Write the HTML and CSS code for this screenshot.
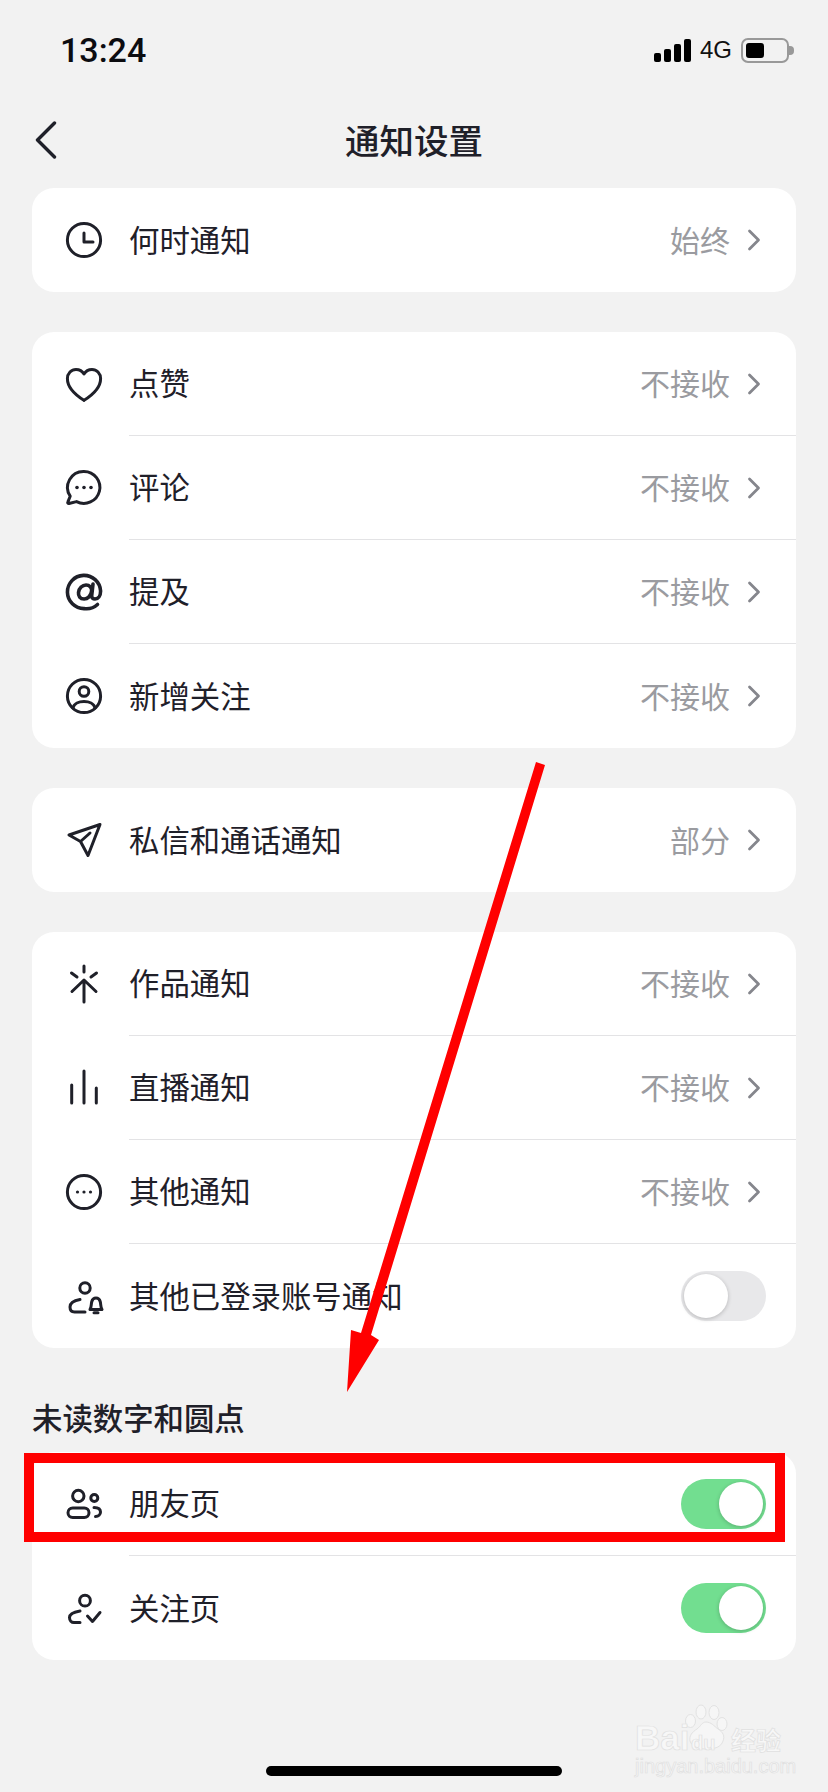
FILE: index.html
```html
<!DOCTYPE html>
<html lang="zh-CN">
<head>
  <meta charset="UTF-8">
  <meta name="viewport" content="width=device-width, initial-scale=1.0">
  <title>通知设置</title>
  <link rel="stylesheet" href="styles.css">
</head>
<body>
  <!-- Status bar -->
  <div class="status-bar">
    <span class="clock">13:24</span>
    <div class="status-right">
      <div class="signal"><i class="s1"></i><i class="s2"></i><i class="s3"></i><i class="s4"></i></div>
      <span class="network">4G</span>
      <div class="battery"><div class="battery-fill"></div></div>
      <div class="battery-nub"></div>
    </div>
  </div>

  <!-- Nav -->
  <div class="nav">
    <svg class="back" width="24" height="38" viewBox="0 0 24 38"><path d="M20.5 2L3.5 19l17 17"/></svg>
    <h1>通知设置</h1>
  </div>

  <div class="content">
    <div class="card">
      <div class="row">
        <svg class="icon" viewBox="0 0 40 40"><circle cx="20" cy="20" r="16.6"/><path d="M20 13v9h9"/></svg>
        <div class="row-body"><span class="label">何时通知</span><span class="value">始终</span>
          <svg class="chevron" viewBox="0 0 14 22"><path d="M2.5 2l9 9-9 9"/></svg></div>
      </div>
    </div>

    <div class="card">
      <div class="row">
        <svg class="icon" viewBox="0 0 40 40"><path d="M20 36.4C17 34.5 3.4 26 3.4 14.8 3.4 9.4 7.4 5.4 12 5.4c3.4 0 6.4 1.8 8 4.6 1.6-2.8 4.6-4.6 8-4.6 4.6 0 8.6 4 8.6 9.4C36.6 26 23 34.5 20 36.4z"/></svg>
        <div class="row-body"><span class="label">点赞</span><span class="value">不接收</span>
          <svg class="chevron" viewBox="0 0 14 22"><path d="M2.5 2l9 9-9 9"/></svg></div>
      </div>
      <div class="row">
        <svg class="icon" viewBox="0 0 40 40"><path d="M20 3.4a16 16 0 1 1-7.5 30.2L5 35.5c-1 .2-1.6-.6-1.2-1.4l2.4-5.9A16 16 0 0 1 20 3.4z"/><circle class="dot" cx="13" cy="19.5" r="1.8"/><circle class="dot" cx="20" cy="19.5" r="1.8"/><circle class="dot" cx="27" cy="19.5" r="1.8"/></svg>
        <div class="row-body"><span class="label">评论</span><span class="value">不接收</span>
          <svg class="chevron" viewBox="0 0 14 22"><path d="M2.5 2l9 9-9 9"/></svg></div>
      </div>
      <div class="row">
        <svg class="icon icon-at" viewBox="0 0 40 40"><path d="M33.5 32.5A16.4 16.4 0 0 1 20 36.6 16.6 16.6 0 1 1 36.6 19c0 5-2.6 8-5.600 8-2 0-3.500-1-3.300-3.500L29 12"/><path d="M27.600 19c-.5 5-4 8-7.500 8-4 0-6-3-5.600-6.500.5-4.500 4-7.500 7.500-7.500 3.500 0 6 2.500 5.600 6z"/></svg>
        <div class="row-body"><span class="label">提及</span><span class="value">不接收</span>
          <svg class="chevron" viewBox="0 0 14 22"><path d="M2.5 2l9 9-9 9"/></svg></div>
      </div>
      <div class="row">
        <svg class="icon" viewBox="0 0 40 40"><circle cx="20" cy="20" r="16.6"/><circle cx="20" cy="15.5" r="4.8"/><path d="M9 32c1-4.500 6-6.500 11-6.500s10 2 11 6.500"/></svg>
        <div class="row-body"><span class="label">新增关注</span><span class="value">不接收</span>
          <svg class="chevron" viewBox="0 0 14 22"><path d="M2.5 2l9 9-9 9"/></svg></div>
      </div>
    </div>

    <div class="card">
      <div class="row">
        <svg class="icon" viewBox="0 0 40 40"><path d="M36 4.5L5 15l11.500 6.500L24 35.500zM16.500 21.500L26 13"/></svg>
        <div class="row-body"><span class="label">私信和通话通知</span><span class="value">部分</span>
          <svg class="chevron" viewBox="0 0 14 22"><path d="M2.5 2l9 9-9 9"/></svg></div>
      </div>
    </div>

    <div class="card">
      <div class="row">
        <svg class="icon" viewBox="0 0 40 40"><path d="M20 16v22M8 27.500l12-11.500 12 11.500M20 2v6M7.500 9l5.500 4M32.500 9l-5.500 4"/></svg>
        <div class="row-body"><span class="label">作品通知</span><span class="value">不接收</span>
          <svg class="chevron" viewBox="0 0 14 22"><path d="M2.5 2l9 9-9 9"/></svg></div>
      </div>
      <div class="row">
        <svg class="icon" viewBox="0 0 40 40"><path d="M7.700 17v18M20 3v32M32.300 20v15"/></svg>
        <div class="row-body"><span class="label">直播通知</span><span class="value">不接收</span>
          <svg class="chevron" viewBox="0 0 14 22"><path d="M2.5 2l9 9-9 9"/></svg></div>
      </div>
      <div class="row">
        <svg class="icon" viewBox="0 0 40 40"><circle cx="20" cy="20" r="16.6"/><circle class="dot" cx="13.5" cy="20" r="1.6"/><circle class="dot" cx="20" cy="20" r="1.6"/><circle class="dot" cx="26.5" cy="20" r="1.6"/></svg>
        <div class="row-body"><span class="label">其他通知</span><span class="value">不接收</span>
          <svg class="chevron" viewBox="0 0 14 22"><path d="M2.5 2l9 9-9 9"/></svg></div>
      </div>
      <div class="row">
        <svg class="icon" viewBox="0 0 40 40"><circle cx="21" cy="12" r="5.2"/><path d="M16 23.500c-6 1-10 3.500-10 7.500 0 3.500 2 5 4.500 5H21"/><path d="M26 33.500c1.500-2 1-5 1.800-8 .7-2.500 2.200-3.500 4.200-3.500s3.500 1 4.200 3.500c.8 3 .3 6 1.800 8zM30 36.800h4"/></svg>
        <div class="row-body"><span class="label">其他已登录账号通知</span>
          <div class="toggle"><div class="knob"></div></div></div>
      </div>
    </div>

    <h2 class="section-title">未读数字和圆点</h2>
    <div class="card">
      <div class="row">
        <svg class="icon" viewBox="0 0 40 40"><circle cx="14.3" cy="12" r="5.7"/><rect x="4" y="24" width="21" height="9.5" rx="4.7"/><circle cx="30.3" cy="14" r="3.5"/><path d="M30 23.500c4.500 0 6.500 2 6.500 4.500s-2 4.500-5 4.500"/></svg>
        <div class="row-body"><span class="label">朋友页</span>
          <div class="toggle on"><div class="knob"></div></div></div>
      </div>
      <div class="row">
        <svg class="icon" viewBox="0 0 40 40"><circle cx="21" cy="12.7" r="5.4"/><path d="M16 23c-6 1-10.500 3-10.500 6.500 0 3 2 5 4.500 5h6"/><path d="M23.500 28l5 5.500 7.500-9"/></svg>
        <div class="row-body"><span class="label">关注页</span>
          <div class="toggle on"><div class="knob"></div></div></div>
      </div>
    </div>
  </div>

  <div class="home-bar"></div>

  <!-- Annotations drawn over the screenshot -->
  <div class="red-box"></div>
  <svg class="red-arrow" width="828" height="1792" viewBox="0 0 828 1792"><polygon points="536,762 545,765 371,1335 379,1340 347,1392 351,1330 361,1333"/></svg>

  <!-- Watermark -->
  <div class="watermark">
    <svg class="paw" width="50" height="52" viewBox="0 0 50 52"><ellipse cx="17" cy="9" rx="5" ry="7"/><ellipse cx="30" cy="9.5" rx="5" ry="7"/><ellipse cx="6.5" cy="18" rx="5" ry="6.5"/><ellipse cx="38" cy="21" rx="5" ry="6.5"/><path d="M22 19c5 0 8 4 12 7 5 3 7 7 5 12-2 6-8 8-16 8-8 0-15-2-17-8-1-5 2-9 7-12 4-3 5-7 9-7z"/></svg>
    <div class="wm-top"><span class="wm-bai">Bai</span><span class="wm-du">du</span><span class="wm-cn">经验</span></div>
    <div class="wm-url">jingyan.baidu.com</div>
  </div>
</body>
</html>
```

FILE: styles.css
```css
* {
  box-sizing: border-box;
}

body {
  margin: 0;
  width: 828px;
  height: 1792px;
  position: relative;
  overflow: hidden;
  background-color: #f2f2f2;
  color: #1f2029;
  font-family: "Noto Sans CJK SC", "Noto Sans", sans-serif;
}

/* Status bar */
.status-bar {
  height: 100px;
  padding: 0 34px 0 60px;
  display: flex;
  justify-content: space-between;
  align-items: center;
}
.clock {
  font-family: Roboto, "Liberation Sans", sans-serif;
  font-size: 34px;
  font-weight: 500;
  color: #0c0c10;
}
.status-right {
  display: flex;
  align-items: center;
}
.signal {
  display: flex;
  align-items: flex-end;
  gap: 3px;
  height: 23px;
  margin-right: 9px;
}
.signal i {
  display: block;
  width: 7px;
  background-color: #000;
  border-radius: 2px;
}
.s1 { height: 9px; }
.s2 { height: 13px; }
.s3 { height: 18px; }
.s4 { height: 23px; }
.network {
  font-family: "Liberation Sans", sans-serif;
  font-size: 24px;
  color: #111;
  margin-right: 9px;
}
.battery {
  width: 48px;
  height: 25px;
  padding: 3px;
  border: 2px solid #999;
  border-radius: 7px;
}
.battery-fill {
  width: 18px;
  height: 100%;
  background-color: #000;
  border-radius: 3px;
}
.battery-nub {
  width: 5px;
  height: 9px;
  background-color: #999;
  border-radius: 0 4px 4px 0;
}

/* Nav */
.nav {
  height: 80px;
  margin-bottom: 8px;
  display: flex;
  align-items: center;
  justify-content: center;
  position: relative;
}
.back {
  position: absolute;
  left: 34px;
  top: 21px;
}
.back path {
  fill: none;
  stroke: #1f2029;
  stroke-width: 3.4;
  stroke-linecap: round;
  stroke-linejoin: round;
}
.nav h1 {
  margin: 0 0 2px;
  font-size: 34.5px;
  font-weight: 500;
  line-height: 48px;
}

/* Cards and rows */
.content {
  padding: 0 32px;
}
.card {
  background-color: #fff;
  border-radius: 22px;
  margin-bottom: 40px;
  overflow: hidden;
}
.row {
  height: 104px;
  padding-left: 32px;
  display: flex;
  align-items: center;
  gap: 25px;
}
.icon {
  width: 40px;
  height: 40px;
  flex: none;
  overflow: visible;
  fill: none;
  stroke: #1f2029;
  stroke-width: 3;
  stroke-linecap: round;
  stroke-linejoin: round;
}
.icon-at {
  stroke-width: 3.6;
}
.icon .dot {
  fill: #1f2029;
  stroke: none;
}
.row-body {
  flex: 1;
  height: 100%;
  padding-right: 30px;
  display: flex;
  align-items: center;
  border-bottom: 1px solid #e3e3e5;
}
.row:last-child .row-body {
  border-bottom: none;
}
.label {
  flex: 1;
  font-size: 30.4px;
  line-height: 42px;
  padding-bottom: 3px;
}
.value {
  font-size: 30px;
  line-height: 42px;
  padding-bottom: 3px;
  color: #9a9ba0;
}
.chevron {
  width: 14px;
  height: 22px;
  margin: 0 5px 0 17px;
  fill: none;
  stroke: #85868c;
  stroke-width: 2.8;
  stroke-linecap: round;
  stroke-linejoin: round;
}

/* Switches */
.toggle {
  width: 85px;
  height: 50px;
  padding: 3px;
  display: flex;
  border-radius: 25px;
  background-color: #e8e8ea;
}
.toggle .knob {
  width: 44px;
  height: 44px;
  border-radius: 50%;
  background-color: #fff;
  box-shadow: 0 1px 4px rgba(0,0,0,0.22);
}
.toggle.on {
  justify-content: flex-end;
  background-color: #72de90;
}

.section-title {
  margin: 49px 0 15px;
  font-size: 30.4px;
  font-weight: 500;
  line-height: 40px;
}

.home-bar {
  position: absolute;
  left: 266px;
  top: 1766px;
  width: 296px;
  height: 10px;
  border-radius: 5px;
  background-color: #000;
}

/* Red annotations */
.red-box {
  position: absolute;
  left: 24px;
  top: 1453px;
  width: 761px;
  height: 89px;
  border: 10px solid #f00;
}
.red-arrow {
  position: absolute;
  left: 0;
  top: 0;
}
.red-arrow polygon {
  fill: #f00;
}

/* Baidu watermark */
.watermark {
  position: absolute;
  left: 635px;
  top: 1703px;
  width: 150px;
  height: 72px;
}
.paw {
  position: absolute;
  left: 49px;
  top: 0;
  fill: #f6f6f6;
  stroke: #e2e2e2;
  stroke-width: 1;
}
.wm-top,
.wm-url {
  position: absolute;
  left: 0;
  font-family: "Liberation Sans", sans-serif;
  color: #f7f7f7;
  -webkit-text-stroke: 0.7px #e0e0e0;
  white-space: nowrap;
}
.wm-top {
  top: 17px;
  width: 150px;
  height: 36px;
  display: flex;
  align-items: baseline;
}
.wm-bai {
  width: 56px;
  font-size: 35px;
  font-weight: 700;
  line-height: 36px;
}
.wm-du {
  width: 40px;
  font-size: 20px;
  font-weight: 700;
  line-height: 36px;
}
.wm-cn {
  font-family: "Noto Sans CJK SC", sans-serif;
  font-size: 25px;
  font-weight: 700;
  line-height: 36px;
}
.wm-url {
  top: 52px;
  font-size: 20px;
  line-height: 22px;
}
```
